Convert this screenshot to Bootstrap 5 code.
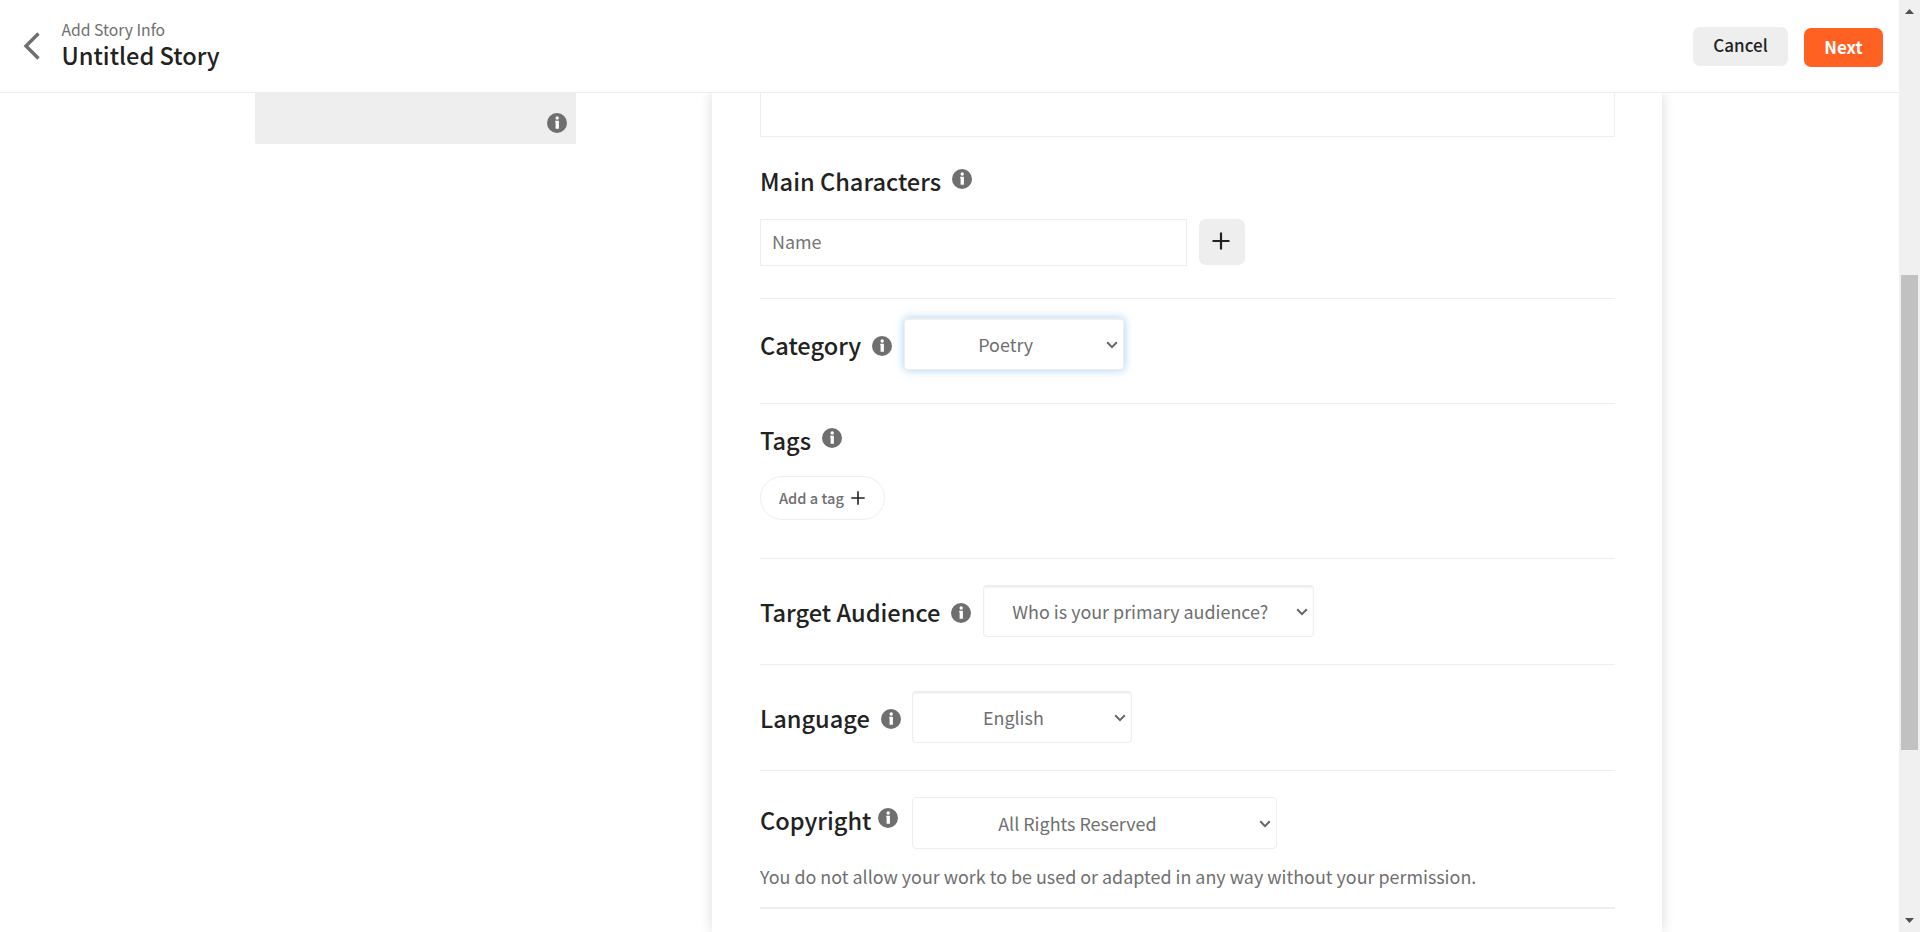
<!DOCTYPE html>
<html lang="en">
<head>
<meta charset="utf-8">
<title>Add Story Info</title>
<link rel="stylesheet" href="https://cdn.jsdelivr.net/npm/bootstrap@5.3.0/dist/css/bootstrap.min.css">
<style>
  body { font-family: "Noto Sans CJK SC", "Noto Sans", sans-serif; color: #222; background: #fff; height: 932px; overflow: hidden; }
  .topbar { height: 93px; border-bottom: 1px solid #eee; padding: 18px 16px 0 23px; }
  .crumb { font-size: 15.73px; line-height: 24px; color: #6f6f6f; }
  .story-title, .field-title { font-size: 23.6px; font-weight: 500; color: #222; margin: 0; white-space: nowrap; }
  .story-title { line-height: 27px; }
  .field-title { line-height: 30px; }
  .btn-cancel, .btn-next, .btn-plus { border: 0; border-radius: 7px; height: 39px; line-height: 35px; padding: 0 0 4px; font-size: 17px; font-weight: 500; }
  .btn-cancel, .btn-plus { background: #eee; color: #222; }
  .btn-cancel { width: 95px; margin-top: 9px; }
  .btn-next { width: 79px; margin-top: 10px; background: #ff6122; color: #fff; font-weight: 700; font-size: 16.9px; line-height: 38px; padding-bottom: 1px; }
  .btn-plus { width: 46px; height: 46px; line-height: 0; padding: 0 3px 2px 0; }
  .cover-box { width: 321px; height: 51px; margin-left: 255px; background: #eee; border-radius: 0 0 0 2px; padding: 20px 9px 0 0; }
  .story-card { width: 950px; margin-left: 136px; padding: 0 47px 0 48px; box-shadow: 0 0 12px rgba(0,0,0,.15); background: #fff; }
  .desc-area { height: 44px; border: 1px solid #eee; border-top: 0; }
  .form-row { border-top: 1px solid #eee; }
  .info { width: 20px; height: 20px; flex: none; display: block; }
  .name-input { width: 427px; height: 47px; border: 1px solid #eee; border-radius: 0; padding: 0 11px 4px; font-size: 17.92px; }
  .name-input::placeholder { color: #757575; opacity: 1; }
  .pick { height: 52px; width: 220px; border: 1px solid #eee; border-radius: 4px; padding: 0 17px 1px 0; font-size: 17.92px; line-height: 48px; color: #6f6f6f; text-align: center; text-align-last: center;
    background: #fff url("data:image/svg+xml,%3Csvg xmlns='http://www.w3.org/2000/svg' width='12' height='8'%3E%3Cpath d='M1.2 1.3 6 6.1l4.8-4.8' fill='none' stroke='%23666' stroke-width='2'/%3E%3C/svg%3E") no-repeat right 5px top 21px / 12px 8px; box-shadow: inset 0 1px 2px rgba(0,0,0,.05); border-top-width: 2px; }
  .pick.is-active { box-shadow: 0 0 10px rgba(102,175,233,.6); }
  .pick-flat { border-top-width: 1px; box-shadow: none; padding-bottom: 0; background-position: right 5px top 22px; }
  .tag-pill { width: 125px; height: 44px; border: 1px solid #eee; padding-left: 18px; font-size: 14.65px; font-weight: 500; color: #6f6f6f; }
  .note { font-size: 17.9px; line-height: 26px; color: #6f6f6f; }
  .sbar { width: 21px; background: #f0f0f0; }
  .thumb { width: 17px; height: 475px; background: #c1c1c1; }
</style>
</head>
<body class="d-flex">
<svg width="0" height="0" class="position-absolute">
  <symbol id="info" viewBox="0 0 20 20"><circle cx="10" cy="10" r="10" fill="#6f6f6f"/><circle cx="10.2" cy="5" r="1.7" fill="#fff"/><path d="M8.2 7.8h3.7v7.9H8.6V9.2h-.4z" fill="#fff"/></symbol>
</svg>

<div class="flex-grow-1 d-flex flex-column overflow-hidden">
  <header class="topbar d-flex flex-shrink-0">
    <svg width="17" height="28" viewBox="0 0 17 28" fill="none" stroke="#6f6f6f" stroke-width="3.4" style="margin-top:14px"><path d="M15.5 1.5 3 14l12.5 12.5"/></svg>
    <div class="me-auto" style="margin-left:21.5px">
      <div class="crumb">Add Story Info</div>
      <h1 class="story-title">Untitled Story</h1>
    </div>
    <button class="btn btn-cancel">Cancel</button>
    <button class="btn btn-next ms-3">Next</button>
  </header>

  <main class="d-flex flex-grow-1 overflow-hidden">
    <aside class="cover-box d-flex justify-content-end"><svg class="info"><use href="#info"/></svg></aside>

    <section class="story-card">
      <div class="desc-area"></div>

      <div style="height:161px;padding-top:29px">
        <div class="d-flex">
          <h2 class="field-title">Main Characters</h2>
          <svg class="info" style="margin:3px 0 0 11px"><use href="#info"/></svg>
        </div>
        <div class="d-flex" style="margin-top:23px;gap:12px">
          <input class="form-control name-input" placeholder="Name">
          <button class="btn btn-plus"><svg width="18" height="18" viewBox="0 0 18 18" stroke="#222" stroke-width="2.2"><path d="M9 .5v17M.5 9h17"/></svg></button>
        </div>
      </div>

      <div class="form-row" style="height:105px;padding-top:19px">
        <div class="d-flex align-items-center">
          <h2 class="field-title" style="padding-top:2px">Category</h2>
          <svg class="info mt-1" style="margin:0 12px 0 11px"><use href="#info"/></svg>
          <select class="form-select pick is-active"><option>Poetry</option></select>
        </div>
      </div>

      <div class="form-row" style="height:155px;padding-top:21px">
        <div class="d-flex">
          <h2 class="field-title">Tags</h2>
          <svg class="info" style="margin:3px 0 0 11px"><use href="#info"/></svg>
        </div>
        <div class="tag-pill rounded-pill d-flex align-items-center" style="margin-top:21px">Add a tag
          <svg width="14" height="14" viewBox="0 0 14 14" stroke="#222" stroke-width="1.6" style="margin-left:7px"><path d="M7 .3v13.4M.3 7h13.4"/></svg>
        </div>
      </div>

      <div class="form-row" style="height:106px;padding-top:26px">
        <div class="d-flex align-items-center">
          <h2 class="field-title" style="padding-top:2px">Target Audience</h2>
          <svg class="info mt-1" style="margin:0 12px 0 11px"><use href="#info"/></svg>
          <select class="form-select pick" style="width:331px"><option>Who is your primary audience?</option></select>
        </div>
      </div>

      <div class="form-row" style="height:106px;padding-top:26px">
        <div class="d-flex align-items-center">
          <h2 class="field-title" style="padding-top:2px">Language</h2>
          <svg class="info mt-1" style="margin:0 11px 0 11px"><use href="#info"/></svg>
          <select class="form-select pick"><option>English</option></select>
        </div>
      </div>

      <div class="form-row" style="height:137px;padding-top:26px">
        <div class="d-flex">
          <h2 class="field-title" style="padding-top:8px">Copyright</h2>
          <svg class="info" style="margin:11px 14px 0 7px"><use href="#info"/></svg>
          <select class="form-select pick pick-flat" style="width:365px;padding-right:35px"><option>All Rights Reserved</option></select>
        </div>
        <div class="note" style="margin-top:14px">You do not allow your work to be used or adapted in any way without your permission.</div>
      </div>
      <div class="form-row" style="border-top-width:2px;height:40px"></div>
    </section>
  </main>
</div>

<div class="sbar d-flex flex-column align-items-center flex-shrink-0">
  <svg width="9" height="5" viewBox="0 0 9 5" style="margin-top:9px;margin-bottom:261px"><path d="M0 5 4.5 0 9 5z" fill="#505050"/></svg>
  <div class="thumb"></div>
  <svg class="mt-auto" width="9" height="5" viewBox="0 0 9 5" style="margin-bottom:9px"><path d="M0 0 4.5 5 9 0z" fill="#505050"/></svg>
</div>
<script src="https://cdn.jsdelivr.net/npm/bootstrap@5.3.0/dist/js/bootstrap.bundle.min.js"></script>
</body>
</html>
